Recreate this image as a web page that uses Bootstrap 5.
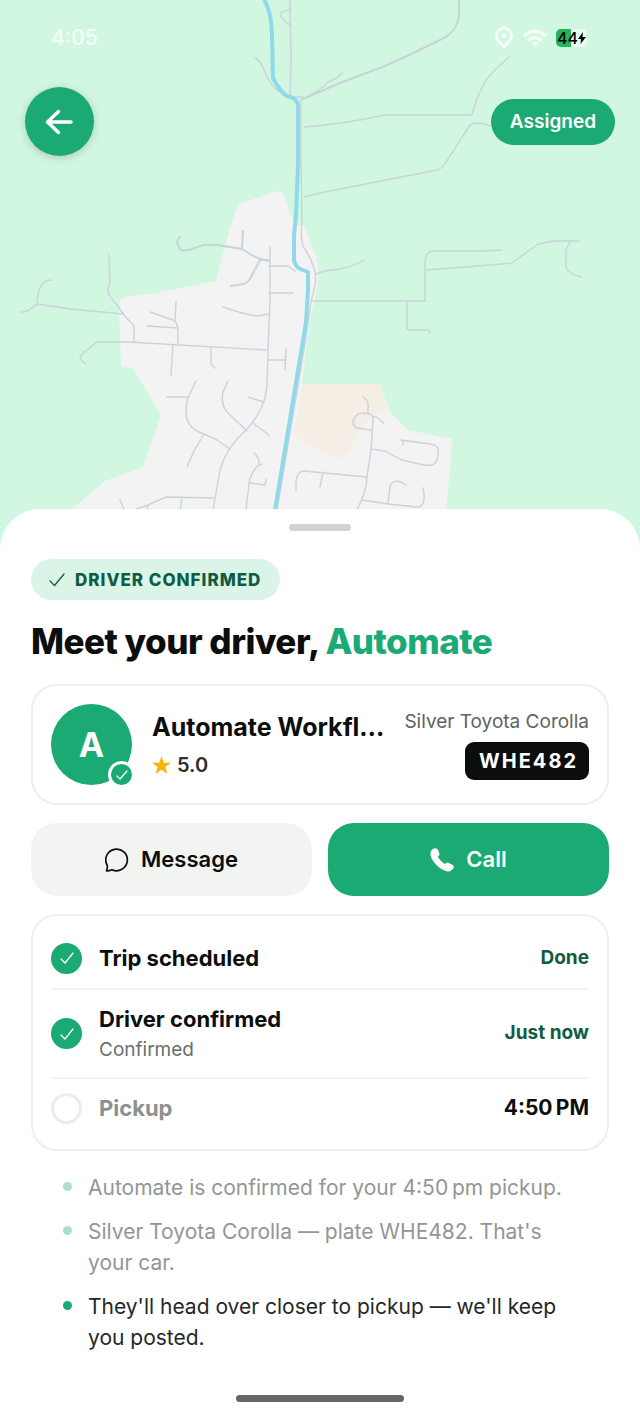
<!DOCTYPE html>
<html lang="en">
<head>
<meta charset="utf-8">
<meta name="viewport" content="width=device-width, initial-scale=1">
<title>Your driver</title>
<link href="https://cdn.jsdelivr.net/npm/bootstrap@5.3.0/dist/css/bootstrap.min.css" rel="stylesheet">
<style>
  :root { --brand: #1ba974; --brand-dark: #0f5c42; --ink: #0b0e0c; --line: #efefef; }
  body { font-family: Inter, "Liberation Sans", sans-serif; color: var(--ink); background: #fff; }
  svg { display: block; flex-shrink: 0; }
  .map-area { height: 549px; background: #d1f7e1; }
  .map-canvas { z-index: 0; }
  .map-top { z-index: 1; }
  .status-row { padding: 22px 53px 0 51px; color: #f4fdf8; }
  .status-time { font-size: 21px; line-height: 32px; }
  .battery { width: 31px; height: 18px; border-radius: 5px; font-size: 16px; line-height: 18px; color: #000;
    background: linear-gradient(90deg, #23b45c 50%, #e8fbf0 50%); }
  .map-controls { padding: 33px 25px 0; }
  .back-btn { width: 69px; height: 69px; background: var(--brand); box-shadow: 0 2px 8px rgba(0,0,0,.18); }
  .back-btn:hover, .back-btn:focus { background: var(--brand); }
  .state-pill { background: var(--brand); font-size: 19px; line-height: 24px; padding: 11px 19px; }
  .sheet { margin-top: -40px; border-radius: 40px 40px 0 0; padding: 15px 31px 0; }
  .grabber { width: 62px; height: 7px; background: #d0d2d8; }
  .confirm-pill { margin-top: 28px; padding: 9px 19px 8px 18px; gap: 10px; background: #daf4e8; color: var(--brand-dark);
    font-size: 17px; line-height: 24px; letter-spacing: 1px; }
  .heavy { font-weight: 800; }
  .headline { margin: 19px 0 20px; font-size: 35px; line-height: 45px; letter-spacing: -.5px; }
  .brand-text { color: var(--brand); }
  .panel { border: 2px solid var(--line); border-radius: 26px; padding: 18px; }
  .avatar { width: 81px; height: 81px; background: var(--brand); font-size: 34px; }
  .avatar-check { right: -3px; bottom: -3px; width: 27px; height: 27px; border: 3px solid #fff; background: var(--brand); }
  .driver-name { font-size: 25px; line-height: 36px; }
  .rating { font-size: 20px; line-height: 30px; gap: 6px; margin-top: 5px; color: #2b2f2d; }
  .car-name { font-size: 19px; line-height: 24px; color: #5d6361; }
  .plate { background: var(--ink); border-radius: 9px; font-size: 20px; line-height: 26px; letter-spacing: 2px; padding: 6px 11px 6px 14px; margin-top: 8px; }
  .action-row { margin-top: 18px; margin-bottom: 18px; }
  .action-btn { height: 73px; border: 0; border-radius: 26px; font-size: 22px; gap: 12px; }
  .btn-msg, .btn-msg:hover { background: #f2f4f2; color: var(--ink); }
  .btn-call, .btn-call:hover { background: var(--brand); color: #fff; }
  .steps { padding: 12px 18px; }
  .step { gap: 17px; padding: 13px 0; min-height: 60px; }
  .step + .step { border-top: 2px solid #f3f3f3; }
  .dot-state { width: 31px; height: 31px; background: var(--brand); }
  .dot-open { background: #fff; border: 3px solid #ebedec; }
  .step-title { font-size: 22px; line-height: 32px; }
  .step-sub { font-size: 19px; line-height: 29px; color: #66706c; }
  .step-note { font-size: 19px; color: var(--brand-dark); }
  .step-time { font-size: 21px; }
  .muted { color: #8c908e; }
  .updates { margin: 21px 0 0; padding: 0 20px 0 32px; gap: 13px; font-size: 21px; line-height: 31px; color: #232826; }
  .updates li { gap: 16px; }
  .updates li::before { content: ""; flex: none; width: 9px; height: 9px; margin-top: 10px; border-radius: 50%; background: var(--brand); }
  .updates .past { color: #929694; }
  .updates .past::before { background: #aadfca; }
  .home-bar { width: 168px; height: 7px; margin: 42px auto 15px; background: #666; }
</style>
</head>
<body>
<main class="d-flex flex-column min-vh-100">
  <section class="map-area position-relative overflow-hidden" aria-label="Map">
    <svg class="map-canvas position-absolute top-0 start-0 w-100 h-100" viewBox="0 0 640 549" preserveAspectRatio="xMidYMin slice" fill="none" aria-hidden="true">
      <defs><linearGradient id="sand" x1="0" y1="0" x2=".3" y2="1"><stop stop-color="#f5eee2"/><stop offset="1" stop-color="#f5eee6"/></linearGradient></defs>
      <path fill="#f4f3f4" d="M238 205 270 193Q282 188 285 197L290 213 296 226 304 225 310 242 317 257 319 272 316 292 309 325 302 384H380L390 412 408 430 452 439 450 470 442 549H40L72 509 105 481 143 467 147 455 161 415 133 368 121 367 119 305Q119 297 130 296L150 294 216 281 222 258 230 228Z"/>
      <path fill="url(#sand)" d="M302 384H380L388 410Q368 414 363 428L346 455Q338 462 329 455L303 442 294 434Z"/>
      <g stroke="#c9d3da" stroke-width="1.4" stroke-linecap="round" stroke-linejoin="round">
        <path d="M290 0 291 60 290 97M291 9 282 12Q279 15 283 19L291 26"/>
        <path d="M255 58Q260 60 264 70 270 86 280 92M301 97V160L302 225Q300 240 304 248 318 268 315 285L311 302 304 350 277 510"/>
        <path stroke-width="2" d="M459 0V10Q460 31 440 40 412 54 385 66L340 83 303 99"/>
        <path d="M290 97H303M303 99Q315 93 323 87L328 82 335 79 342 73M304 127Q345 124 385 115H472L477 98 486 80Q492 72 509 57M304 197 320 193 437 170Q443 168 446 162L468 128Q472 119 490 126"/>
        <path d="M316 274Q324 270 340 269 354 266 364 260M312 301H426M425 301V262Q425 251 435 251H483L502 250M425 270 466 267 512 263 538 244 554 241 579 241M570 242 566 250V266Q567 274 582 277M407 301V328Q407 330 410 330H426Q430 330 430 333"/>
        <path d="M109 255 110 282 108 290Q107 295 118 306L124 315 134 326V342M21 312Q27 313 37 304 38 280 51 280M37 304 71 309 123 314M86 364Q77 359 82 354L97 342H128L266 350"/>
        <path stroke-width="2" d="M180 237Q174 242 181 250 186 252 203 245H218L242 249 243 231M242 249Q258 260 269 261M269 260H260L250 279Q246 284 243 284L231 286"/>
        <path d="M270 247V300L268 350 267 385Q266 397 262 406 256 420 245 431 226 448 220 470L213 510M269 266H288L295 271M269 293H293M223 307Q250 316 258 316L268 314M268 360H286M286 349 285 370"/>
        <path d="M150 312 173 320Q178 323 178 330V345M176 302 175 321M147 326 178 328M173 345 171 375M211 347V364L215 368M196 381 188 398Q180 427 204 434L217 440 230 449M167 397H187M204 434 194 451 187 467M228 381 223 392Q220 407 230 415L247 431M248 397 264 402M253 423 269 435"/>
        <path d="M120 500 124 509M134 510 148 505 166 497 214 498M147 506 149 512M182 497 180 512M254 453Q260 458 259 465 251 471 249 484L246 510M262 464 259 465M250 483 265 485 266 479M296 491V482Q297 471 304 471L367 477M323 472 320 487"/>
        <path d="M363 397Q368 400 368 405V413M371 430 357 428Q351 425 354 419 357 413 363 413 374 413 373 420L371 450 367 477Q367 490 357 510M373 417Q377 415 384 424M371 449 385 451Q396 457 402 460L424 465Q440 468 438 449 437 445 430 444L401 440M403 441V445M362 500 388 504 417 507Q427 507 423 488M388 503 390 486Q395 477 406 485"/>
      </g>
      <path stroke="#8fd9ea" stroke-width="4" stroke-linejoin="round" d="M264 0Q272 12 272 38L273 78Q280 92 287 96 297 98 298 105V165L296 215 294 235V260Q295 266 300 269L308 272V290L306 322 275 510"/>
    </svg>

    <div class="map-top position-relative">
      <div class="status-row d-flex align-items-center justify-content-between">
        <span class="status-time fw-medium">4:05</span>
        <div class="d-flex align-items-center gap-2">
          <svg width="20" height="24" viewBox="0 0 20 24" fill="none" stroke="currentColor" stroke-width="3" aria-hidden="true"><path d="M10 21C6 17 2.5 14 2.5 9.500a7.500 7.500 0 0 1 15 0C17.500 14 14 17 10 21Z"/><circle cx="10" cy="9.500" r="2.500" fill="currentColor" stroke="none"/></svg>
          <svg width="26" height="20" viewBox="3 0 26 20" fill="none" stroke="currentColor" stroke-width="3.500" aria-hidden="true"><path d="M5 8Q16-1.500 27 8M9.500 12.500Q16 7 22.500 12.500"/><path fill="currentColor" stroke="none" d="M12.500 15Q16 12.500 19.500 15L16 18.500Z"/></svg>
          <span class="battery fw-medium d-flex align-items-center justify-content-center">44<svg width="8" height="12" viewBox="0 0 8 12" aria-hidden="true"><path fill="#000" d="M5 0 0 7H3L2.500 12 8 5H4.500Z"/></svg></span>
        </div>
      </div>
      <div class="map-controls d-flex align-items-center justify-content-between">
        <button type="button" class="btn back-btn rounded-circle border-0 p-0 d-flex align-items-center justify-content-center" aria-label="Back">
          <svg width="30" height="26" viewBox="0 0 30 26" fill="none" stroke="#fff" stroke-width="3.500" stroke-linecap="round" stroke-linejoin="round" aria-hidden="true"><path d="M26 13H2.500M13.500 2.500 2.500 13 13.500 23.500"/></svg>
        </button>
        <span class="state-pill rounded-pill text-white fw-semibold">Assigned</span>
      </div>
    </div>
  </section>

  <section class="sheet position-relative bg-white flex-grow-1 d-flex flex-column">
    <div class="grabber rounded-pill mx-auto"></div>
    <div class="confirm-pill rounded-pill heavy d-flex align-items-center align-self-start">
      <svg width="16" height="14" viewBox="0 0 16 14" fill="none" stroke="currentColor" stroke-width="1.300" stroke-linecap="round" stroke-linejoin="round" aria-hidden="true"><path d="M1 8 5.500 12.500 15 1"/></svg>
      DRIVER CONFIRMED
    </div>
    <h1 class="headline heavy">Meet your driver, <span class="brand-text">Automate</span></h1>

    <div class="panel d-flex align-items-center">
      <div class="avatar rounded-circle position-relative flex-shrink-0 d-flex align-items-center justify-content-center text-white fw-bold">A
        <span class="avatar-check rounded-circle position-absolute d-flex align-items-center justify-content-center">
          <svg width="12" height="10" viewBox="0 0 12 10" fill="none" stroke="#fff" stroke-width="1.200" stroke-linecap="round" stroke-linejoin="round" aria-hidden="true"><path d="M1 6 4 9 11 1"/></svg>
        </span>
      </div>
      <div class="flex-grow-1 ms-3 ps-1">
        <div class="driver-name fw-bold text-nowrap">Automate Workfl…</div>
        <div class="rating fw-semibold d-flex align-items-center">
          <svg width="19" height="18" viewBox="0 0 19 18" aria-hidden="true"><path fill="#f5b50a" d="M9.500 0 11.800 6.700H19L13.300 11 15.400 18 9.500 13.800 3.600 18 5.700 11 0 6.700H7.200Z"/></svg>5.0
        </div>
      </div>
      <div class="flex-shrink-0 d-flex flex-column align-items-end">
        <span class="car-name">Silver Toyota Corolla</span>
        <span class="plate text-white fw-bold">WHE482</span>
      </div>
    </div>

    <div class="row gx-3 action-row">
      <div class="col-6"><button type="button" class="btn action-btn btn-msg w-100 fw-semibold d-flex align-items-center justify-content-center">
        <svg width="24" height="24" viewBox="0 0 24 24" fill="none" stroke="currentColor" stroke-width="1.700" stroke-linejoin="round" aria-hidden="true"><path d="M1.500 22.800Q2.700 20 2.200 17.300A10.800 10.800 0 1 1 7 21.700Q4 23 1.500 22.800Z"/></svg>
        Message</button></div>
      <div class="col-6"><button type="button" class="btn action-btn btn-call w-100 fw-semibold d-flex align-items-center justify-content-center">
        <svg width="24" height="24" viewBox="0 0 24 24" aria-hidden="true"><path fill="currentColor" d="M3.500.7C5.500-.2 7.500.5 8.300 2.600L9.300 5.200C9.800 6.500 9.500 7.300 8.600 8.100L7.900 8.800C9.300 11.600 12 14.400 15 16L16 15.300C16.800 14.600 17.600 14.400 18.700 14.900L22 16.500C23.600 17.300 24.200 18.900 23.300 20.300 21.800 22.800 19.500 24 16.600 23.200 9.500 21 2.500 14.500.6 7.400 0 4.500 1 1.800 3.500.7Z"/></svg>
        Call</button></div>
    </div>

    <div class="panel steps">
      <div class="step d-flex align-items-center">
        <span class="dot-state rounded-circle d-flex align-items-center justify-content-center flex-shrink-0"><svg width="14" height="12" viewBox="0 0 14 12" fill="none" stroke="#fff" stroke-width="1.300" stroke-linecap="round" stroke-linejoin="round" aria-hidden="true"><path d="M1 7 5 11 13 1"/></svg></span>
        <div class="step-title fw-bold flex-grow-1">Trip scheduled</div>
        <span class="step-note fw-bold">Done</span>
      </div>
      <div class="step d-flex align-items-center">
        <span class="dot-state rounded-circle d-flex align-items-center justify-content-center flex-shrink-0"><svg width="14" height="12" viewBox="0 0 14 12" fill="none" stroke="#fff" stroke-width="1.300" stroke-linecap="round" stroke-linejoin="round" aria-hidden="true"><path d="M1 7 5 11 13 1"/></svg></span>
        <div class="flex-grow-1">
          <div class="step-title fw-bold">Driver confirmed</div>
          <div class="step-sub">Confirmed</div>
        </div>
        <span class="step-note fw-bold">Just now</span>
      </div>
      <div class="step d-flex align-items-center">
        <span class="dot-state dot-open rounded-circle flex-shrink-0"></span>
        <div class="step-title fw-bold flex-grow-1 muted">Pickup</div>
        <span class="step-time fw-bold">4:50&#8239;PM</span>
      </div>
    </div>

    <ul class="updates list-unstyled d-flex flex-column">
      <li class="past d-flex">Automate is confirmed for your 4:50&#8239;pm pickup.</li>
      <li class="past d-flex">Silver Toyota Corolla — plate WHE482. That's your car.</li>
      <li class="d-flex">They'll head over closer to pickup — we'll keep you posted.</li>
    </ul>
    <div class="home-bar rounded-pill"></div>
  </section>
</main>
<script src="https://cdn.jsdelivr.net/npm/bootstrap@5.3.0/dist/js/bootstrap.bundle.min.js"></script>
</body>
</html>
